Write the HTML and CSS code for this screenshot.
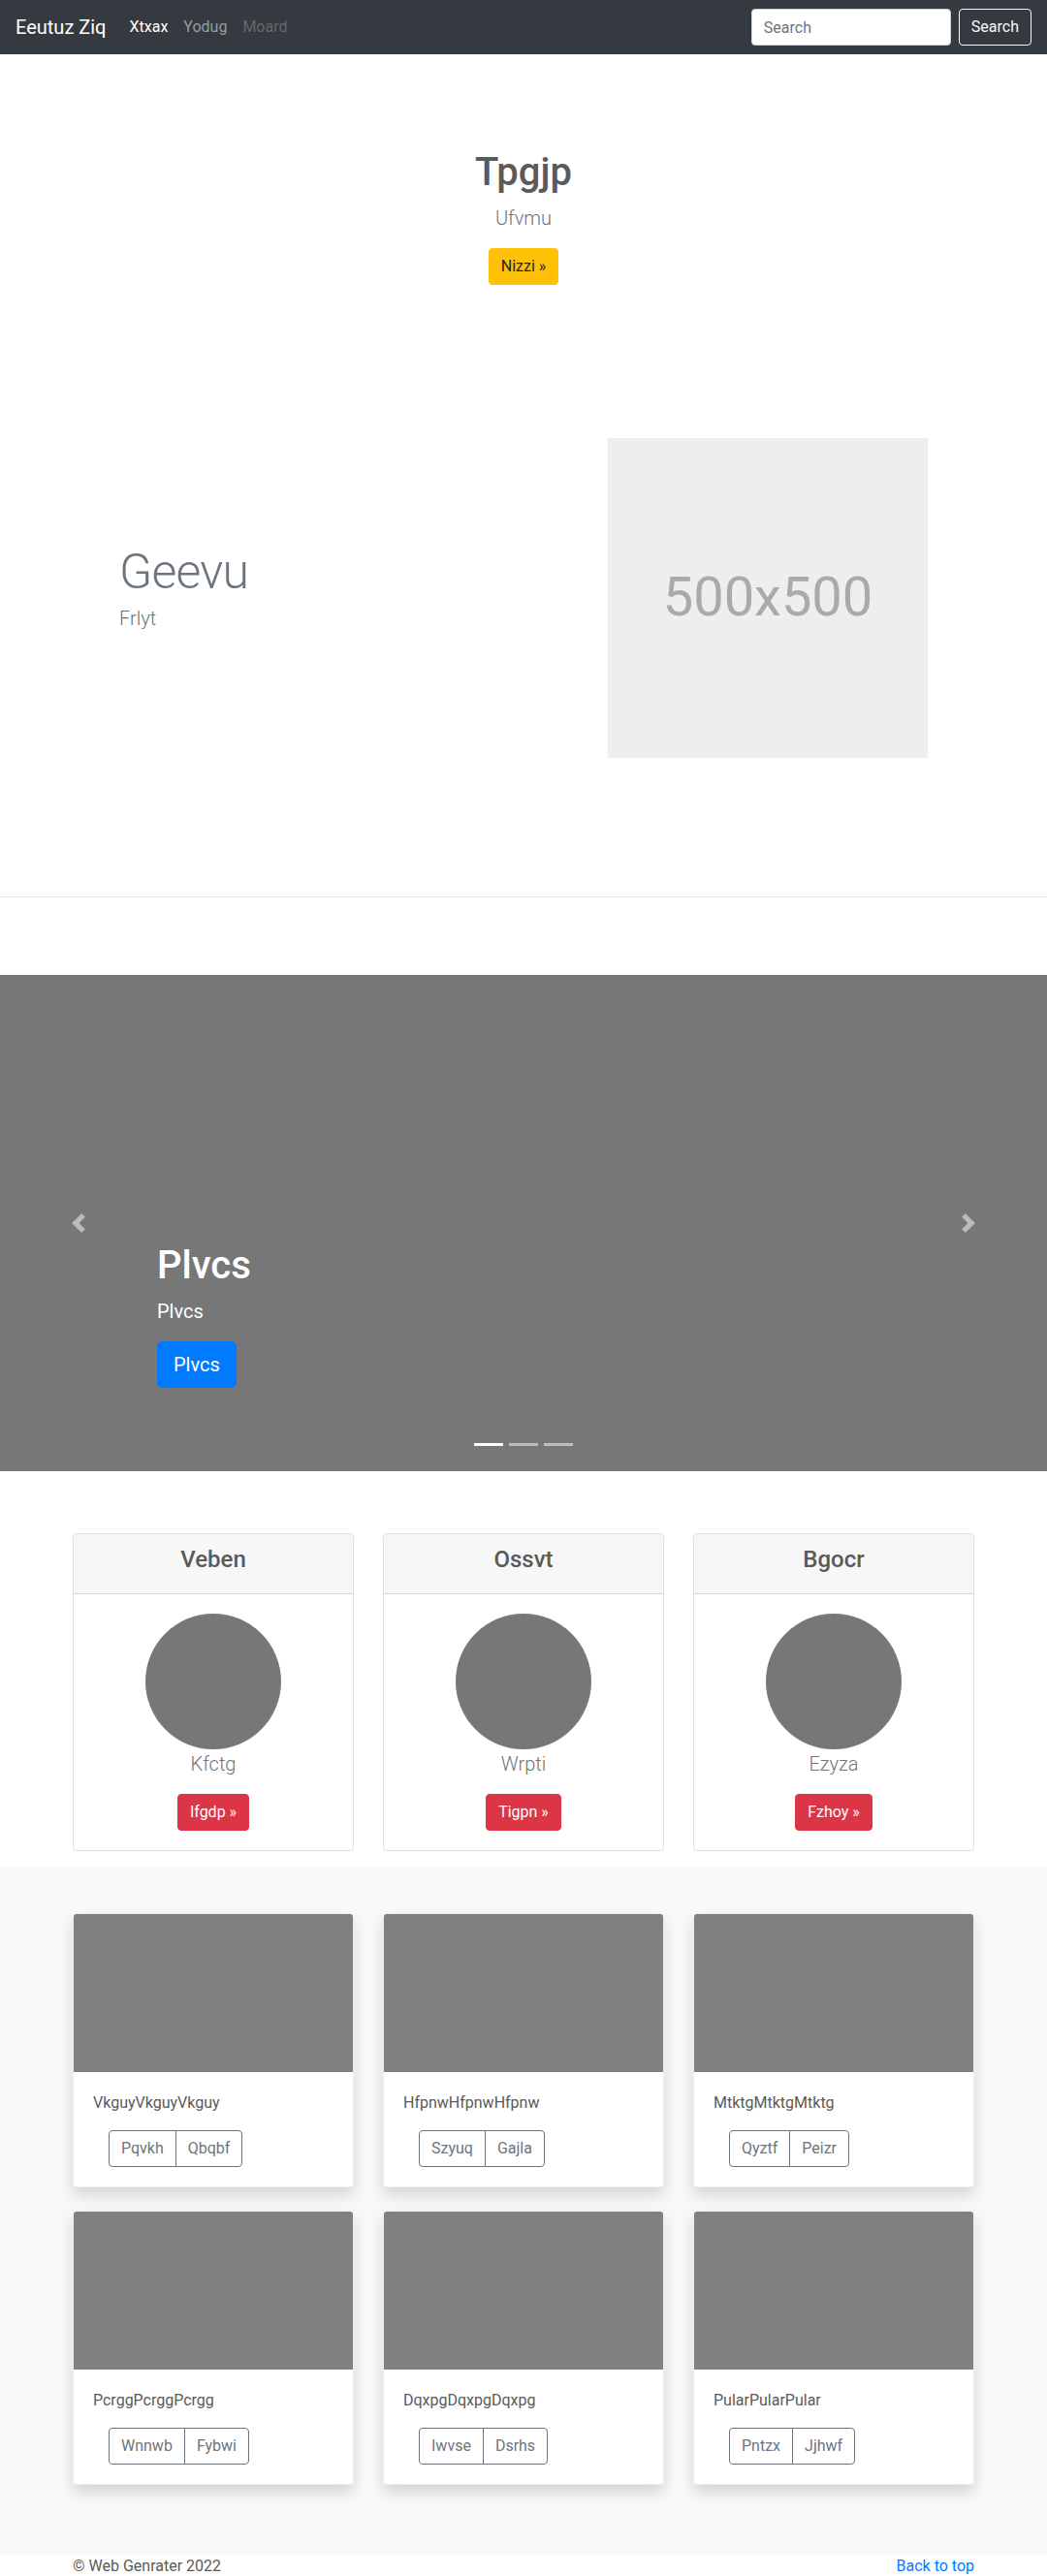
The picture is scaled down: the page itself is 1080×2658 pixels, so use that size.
FILE: index.html
```html
<!DOCTYPE html>
<html lang="en">
<head>
<meta charset="utf-8">
<title>Eeutuz Ziq</title>
<link rel="stylesheet" href="styles.css">
</head>
<body>
<nav class="navbar">
  <a class="brand" href="#">Eeutuz Ziq</a>
  <ul class="nav">
    <li><a class="nav-link active" href="#">Xtxax</a></li>
    <li><a class="nav-link" href="#">Yodug</a></li>
    <li><a class="nav-link disabled" href="#">Moard</a></li>
  </ul>
  <form class="search">
    <input class="search-input" type="text" placeholder="Search">
    <button class="btn btn-outline-light" type="button">Search</button>
  </form>
</nav>

<section class="hero">
  <h1 class="hero-title">Tpgjp</h1>
  <p class="lead muted">Ufvmu</p>
  <div class="hero-action"><a class="btn btn-warning" href="#">Nizzi &raquo;</a></div>
</section>

<section class="feature">
  <div class="feature-text">
    <h2 class="feature-heading">Geevu</h2>
    <p class="lead muted">Frlyt</p>
  </div>
  <div class="feature-img">500x500</div>
</section>

<hr class="divider">

<div class="carousel">
  <ol class="indicators">
    <li class="active"></li>
    <li></li>
    <li></li>
  </ol>
  <div class="caption">
    <h1 class="caption-title">Plvcs</h1>
    <p class="caption-text">Plvcs</p>
    <div class="caption-action"><a class="btn btn-lg btn-primary" href="#">Plvcs</a></div>
  </div>
  <a class="control prev" href="#">
    <svg class="control-icon" viewBox="0 0 8 8"><path fill="#fff" d="M5.25 0l-4 4 4 4 1.5-1.5L4.25 4l2.5-2.5L5.25 0z"/></svg>
  </a>
  <a class="control next" href="#">
    <svg class="control-icon" viewBox="0 0 8 8"><path fill="#fff" d="M2.75 0l-1.5 1.5L3.75 4l-2.5 2.5L2.75 8l4-4-4-4z"/></svg>
  </a>
</div>

<section class="pricing">
  <div class="pcard">
    <div class="pcard-header"><h4 class="pcard-title">Veben</h4></div>
    <div class="pcard-body">
      <div class="circle"></div>
      <p class="lead muted">Kfctg</p>
      <a class="btn btn-danger" href="#">Ifgdp &raquo;</a>
    </div>
  </div>
  <div class="pcard">
    <div class="pcard-header"><h4 class="pcard-title">Ossvt</h4></div>
    <div class="pcard-body">
      <div class="circle"></div>
      <p class="lead muted">Wrpti</p>
      <a class="btn btn-danger" href="#">Tigpn &raquo;</a>
    </div>
  </div>
  <div class="pcard">
    <div class="pcard-header"><h4 class="pcard-title">Bgocr</h4></div>
    <div class="pcard-body">
      <div class="circle"></div>
      <p class="lead muted">Ezyza</p>
      <a class="btn btn-danger" href="#">Fzhoy &raquo;</a>
    </div>
  </div>
</section>

<section class="album">
  <div class="album-grid">
    <div class="acard">
      <div class="acard-img"></div>
      <div class="acard-body">
        <p class="acard-text">VkguyVkguyVkguy</p>
        <div class="btn-group"><a class="btn btn-outline-secondary" href="#">Pqvkh</a><a class="btn btn-outline-secondary" href="#">Qbqbf</a></div>
      </div>
    </div>
    <div class="acard">
      <div class="acard-img"></div>
      <div class="acard-body">
        <p class="acard-text">HfpnwHfpnwHfpnw</p>
        <div class="btn-group"><a class="btn btn-outline-secondary" href="#">Szyuq</a><a class="btn btn-outline-secondary" href="#">Gajla</a></div>
      </div>
    </div>
    <div class="acard">
      <div class="acard-img"></div>
      <div class="acard-body">
        <p class="acard-text">MtktgMtktgMtktg</p>
        <div class="btn-group"><a class="btn btn-outline-secondary" href="#">Qyztf</a><a class="btn btn-outline-secondary" href="#">Peizr</a></div>
      </div>
    </div>
    <div class="acard">
      <div class="acard-img"></div>
      <div class="acard-body">
        <p class="acard-text">PcrggPcrggPcrgg</p>
        <div class="btn-group"><a class="btn btn-outline-secondary" href="#">Wnnwb</a><a class="btn btn-outline-secondary" href="#">Fybwi</a></div>
      </div>
    </div>
    <div class="acard">
      <div class="acard-img"></div>
      <div class="acard-body">
        <p class="acard-text">DqxpgDqxpgDqxpg</p>
        <div class="btn-group"><a class="btn btn-outline-secondary" href="#">Iwvse</a><a class="btn btn-outline-secondary" href="#">Dsrhs</a></div>
      </div>
    </div>
    <div class="acard">
      <div class="acard-img"></div>
      <div class="acard-body">
        <p class="acard-text">PularPularPular</p>
        <div class="btn-group"><a class="btn btn-outline-secondary" href="#">Pntzx</a><a class="btn btn-outline-secondary" href="#">Jjhwf</a></div>
      </div>
    </div>
  </div>
</section>

<footer class="footer">
  <p class="footer-copy">&copy; Web Genrater 2022</p>
  <p class="footer-top"><a href="#">Back to top</a></p>
</footer>
</body>
</html>
```

FILE: styles.css
```css
* { box-sizing: border-box; }

body {
  margin: 0;
  font-family: "Segoe UI", Roboto, "Helvetica Neue", Arial, sans-serif;
  font-size: 16px;
  line-height: 1.5;
  color: #5a5a5a;
  background: #fff;
}

a { text-decoration: none; }

h1, h2, h4 { margin: 0 0 8px; font-weight: 500; line-height: 1.2; }
p { margin: 0 0 16px; }

.lead { font-size: 20px; font-weight: 300; line-height: 30px; }
.muted { color: #6c757d; }

/* buttons */
.btn {
  display: inline-block;
  font-family: inherit;
  font-size: 16px;
  font-weight: 400;
  line-height: 24px;
  padding: 6px 12px;
  border: 1px solid transparent;
  border-radius: 4px;
  text-align: center;
  vertical-align: middle;
  cursor: pointer;
}
.btn-lg { font-size: 20px; line-height: 30px; padding: 8px 16px; border-radius: 5px; }
.btn-warning { background: #ffc107; border-color: #ffc107; color: #212529; }
.btn-primary { background: #007bff; border-color: #007bff; color: #fff; }
.btn-danger { background: #dc3545; border-color: #dc3545; color: #fff; }
.btn-outline-light { background: transparent; border-color: #f8f9fa; color: #f8f9fa; }
.btn-outline-secondary { background: transparent; border-color: #6c757d; color: #6c757d; }

/* navbar */
.navbar {
  display: flex;
  align-items: center;
  height: 56px;
  padding: 0 16px;
  background: #343a40;
}
.brand {
  font-size: 20px;
  line-height: 30px;
  color: #fff;
  margin-right: 16px;
}
.nav {
  display: flex;
  flex: 1;
  list-style: none;
  margin: 0;
  padding: 0;
}
.nav-link {
  display: block;
  padding: 8px;
  color: rgba(255, 255, 255, .5);
}
.nav-link.active { color: #fff; }
.nav-link.disabled { color: rgba(255, 255, 255, .25); }
.search { display: flex; align-items: center; }
.search-input {
  width: 206px;
  height: 38px;
  padding: 6px 12px;
  margin-right: 8px;
  font-family: inherit;
  font-size: 16px;
  color: #495057;
  background: #fff;
  border: 1px solid #ced4da;
  border-radius: 4px;
}
.search-input::placeholder { color: #6c757d; }

/* hero */
.hero {
  text-align: center;
  padding: 98px 0 94px;
}
.hero-title { font-size: 40px; }
.hero-action { display: flex; justify-content: center; margin-bottom: 16px; }

/* featurette */
.feature {
  width: 834px;
  margin: 0 auto;
  padding: 48px 0 143px;
  display: flex;
  align-items: center;
  gap: 30px;
}
.feature-text { width: 474px; }
.feature-heading {
  font-size: 50px;
  font-weight: 300;
  line-height: 1;
  letter-spacing: -0.8px;
  color: #6c757d;
}
.feature-img {
  width: 330px;
  height: 330px;
  flex: none;
  background: #eee;
  color: #aaa;
  font-size: 56px;
  display: flex;
  align-items: center;
  justify-content: center;
  padding-bottom: 2px;
}

.divider {
  margin: 0 0 80px;
  border: 0;
  border-top: 1px solid rgba(0, 0, 0, .1);
  height: 0;
}

/* carousel */
.carousel {
  position: relative;
  height: 512px;
  background: #777;
  margin-bottom: 64px;
}
.caption {
  position: absolute;
  left: 15%;
  right: 15%;
  bottom: 50px;
  padding: 20px 0;
  color: #fff;
}
.caption-title { font-size: 40px; }
.caption-text { font-size: 20px; line-height: 30px; }
.caption-action { margin-bottom: 16px; }
.control {
  position: absolute;
  top: 0;
  bottom: 0;
  width: 15%;
  display: flex;
  align-items: center;
  justify-content: center;
  opacity: .5;
}
.prev { left: 0; }
.next { right: 0; }
.control-icon { width: 20px; height: 20px; display: block; }
.indicators {
  position: absolute;
  left: 0;
  right: 0;
  bottom: 0;
  display: flex;
  justify-content: center;
  list-style: none;
  margin: 0 0 16px;
  padding: 0;
}
.indicators li {
  width: 30px;
  height: 23px;
  margin: 0 3px;
  border-top: 10px solid transparent;
  border-bottom: 10px solid transparent;
  background: #fff;
  background-clip: padding-box;
  opacity: .5;
}
.indicators li.active { opacity: 1; }

/* pricing cards */
.pricing {
  width: 930px;
  margin: 0 auto;
  display: grid;
  grid-template-columns: repeat(3, 1fr);
  column-gap: 30px;
}
.pcard {
  border: 1px solid rgba(0, 0, 0, .125);
  border-radius: 4px;
  text-align: center;
  margin-bottom: 16px;
  overflow: hidden;
}
.pcard-header {
  padding: 12px 20px;
  background: rgba(0, 0, 0, .03);
  border-bottom: 1px solid rgba(0, 0, 0, .125);
}
.pcard-title { font-size: 24px; }
.pcard-body { padding: 20px; }
.circle {
  width: 140px;
  height: 140px;
  margin: 0 auto;
  border-radius: 50%;
  background: #777;
}

/* album */
.album {
  background: #f8f9fa;
  padding: 48px 0 48px;
}
.album-grid {
  width: 930px;
  margin: 0 auto;
  display: grid;
  grid-template-columns: repeat(3, 1fr);
  column-gap: 30px;
}
.acard {
  background: #fff;
  border: 1px solid rgba(0, 0, 0, .06);
  border-radius: 4px;
  overflow: hidden;
  margin-bottom: 24px;
  box-shadow: 0 8px 16px rgba(0, 0, 0, .15);
}
.acard-img { height: 163px; background: #808080; }
.acard-body { padding: 20px; }
.acard-text { font-size: 16px; }
.btn-group { display: inline-flex; margin-left: 16px; }
.btn-group .btn:first-child { border-top-right-radius: 0; border-bottom-right-radius: 0; }
.btn-group .btn + .btn { margin-left: -1px; border-top-left-radius: 0; border-bottom-left-radius: 0; }

/* footer */
.footer {
  width: 930px;
  margin: 0 auto;
  display: flex;
  justify-content: space-between;
}
.footer a { color: #007bff; }
```
